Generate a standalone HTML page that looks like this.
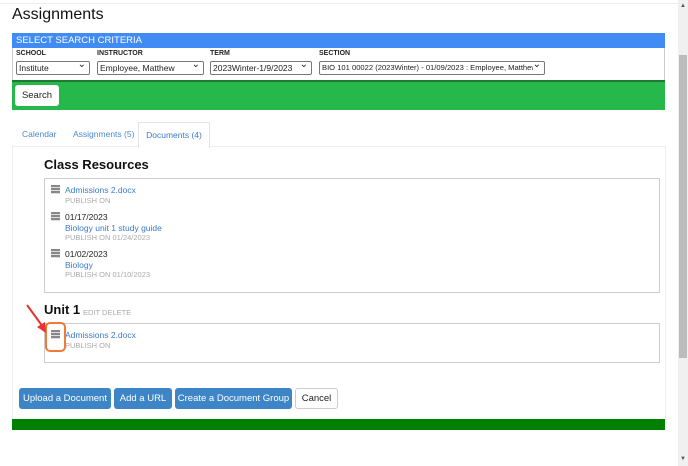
<!DOCTYPE html>
<html><head><style>
body{margin:0;width:688px;height:466px;background:#fff;font-family:"Liberation Sans",sans-serif;position:relative;overflow:hidden}
.a{position:absolute;white-space:nowrap}
.sel{position:absolute;top:61px;height:12px;border:1px solid #777;border-radius:2px;font-size:8.5px;line-height:12px;padding-left:2px;color:#222;white-space:nowrap;overflow:hidden}
.sel:after{content:"⌄";position:absolute;right:3px;top:-3px;font-size:10px;background:#fff}
.lbl{position:absolute;top:50px;font-size:7px;font-weight:bold;color:#222}
.ic{position:absolute;width:9px;height:9px;background:repeating-linear-gradient(#888 0 2px,#ddd 2px 3px)}
.lk{color:#3a7cc9;font-size:8.5px}
.sm{color:#aaa;font-size:7.5px}
.btn{position:absolute;top:388px;height:21px;background:#3d85c6;color:#fff;font-size:9.5px;line-height:21px;text-align:center;border-radius:3px;white-space:nowrap}
</style></head><body>
<div class="a" style="left:0;top:0;width:678px;height:3px;border-bottom:1px solid #eee"></div>
<div class="a" style="left:678px;top:0;width:10px;height:466px;background:#f0f0f0"></div>
<div class="a" style="left:679px;top:55px;width:8px;height:303px;background:#bcbcbc"></div>
<div class="a" style="left:680px;top:3px;font-size:6px;color:#555">▲</div>
<div class="a" style="left:680px;top:456px;font-size:6px;color:#555">▼</div>
<div class="a" style="left:12px;top:6px;font-size:16px;color:#111">Assignments</div>
<div class="a" style="left:12px;top:33px;width:653px;height:15px;background:#418bf5;color:#fff;font-size:9.5px;line-height:15px;padding-left:4px;box-sizing:border-box">SELECT SEARCH CRITERIA</div>
<div class="a" style="left:12px;top:48px;width:651px;height:32px;border-right:1px solid #ccc;border-left:1px solid #ccc"></div>
<div class="lbl" style="left:16px">SCHOOL</div><div class="lbl" style="left:97px">INSTRUCTOR</div><div class="lbl" style="left:210px">TERM</div><div class="lbl" style="left:319px">SECTION</div>
<div class="sel" style="left:16px;width:70px">Institute</div>
<div class="sel" style="left:97px;width:103px">Employee, Matthew</div>
<div class="sel" style="left:210px;width:98px">2023Winter-1/9/2023</div>
<div class="sel" style="left:319px;width:222px;font-size:7.6px">BIO 101 00022 (2023Winter) - 01/09/2023 : Employee, Matthew</div>
<div class="a" style="left:12px;top:80px;width:653px;height:2px;background:#1e7a32"></div>
<div class="a" style="left:12px;top:82px;width:653px;height:28px;background:#27b84b"></div>
<div class="a" style="left:15px;top:85px;width:44px;height:21px;background:#fff;border-radius:3px;font-size:9.5px;line-height:21px;text-align:center;color:#222">Search</div>
<div class="a" style="left:22px;top:129px;font-size:8.5px;color:#4a8ad0">Calendar</div>
<div class="a" style="left:73px;top:129px;font-size:8.5px;color:#4a8ad0">Assignments (5)</div>
<div class="a" style="left:138px;top:122px;width:70px;height:25px;border:1px solid #e4e4e4;border-bottom:none;background:#fff;z-index:2;font-size:8.5px;color:#3a7cc9;text-align:center;line-height:24px">Documents (4)</div>
<div class="a" style="left:12px;top:146px;width:652px;height:273px;border:1px solid #eee;border-bottom:none"></div>
<div class="a" style="left:44px;top:157px;font-size:13px;font-weight:bold;color:#111">Class Resources</div>
<div class="a" style="left:44px;top:178px;width:614px;height:113px;border:1px solid #ccc"></div>
<div class="ic" style="left:51px;top:185px"></div>
<div class="a lk" style="left:65px;top:185px">Admissions 2.docx</div>
<div class="a sm" style="left:65px;top:196px">PUBLISH ON</div>
<div class="ic" style="left:51px;top:212px"></div>
<div class="a" style="left:65px;top:212px;font-size:8.5px;color:#222">01/17/2023</div>
<div class="a lk" style="left:65px;top:223px">Biology unit 1 study guide</div>
<div class="a sm" style="left:65px;top:233px">PUBLISH ON 01/24/2023</div>
<div class="ic" style="left:51px;top:249px"></div>
<div class="a" style="left:65px;top:249px;font-size:8.5px;color:#222">01/02/2023</div>
<div class="a lk" style="left:65px;top:260px">Biology</div>
<div class="a sm" style="left:65px;top:270px">PUBLISH ON 01/10/2023</div>
<div class="a" style="left:44px;top:302px;font-size:13px;font-weight:bold;color:#111">Unit 1</div>
<div class="a sm" style="left:83px;top:308px">EDIT DELETE</div>
<div class="a" style="left:44px;top:323px;width:614px;height:38px;border:1px solid #ccc"></div>
<div class="ic" style="left:51px;top:330px"></div>
<div class="a lk" style="left:65px;top:330px">Admissions 2.docx</div>
<div class="a sm" style="left:65px;top:341px">PUBLISH ON</div>
<div class="a" style="left:45px;top:322px;width:17px;height:26px;border:2px solid #f07a3a;border-radius:5px"></div>
<svg class="a" style="left:24px;top:302px" width="26" height="34"><line x1="3" y1="3" x2="19" y2="25" stroke="#e8332f" stroke-width="2"/><polygon points="22,31 13,25 21,20" fill="#e8332f"/></svg>
<div class="btn" style="left:19px;width:92px">Upload a Document</div>
<div class="btn" style="left:114px;width:58px">Add a URL</div>
<div class="btn" style="left:175px;width:117px">Create a Document Group</div>
<div class="a" style="left:295px;top:388px;width:41px;height:19px;border:1px solid #ccc;border-radius:3px;font-size:9.5px;line-height:19px;text-align:center;color:#222">Cancel</div>
<div class="a" style="left:12px;top:419px;width:653px;height:11px;background:#008000"></div>
</body></html>
